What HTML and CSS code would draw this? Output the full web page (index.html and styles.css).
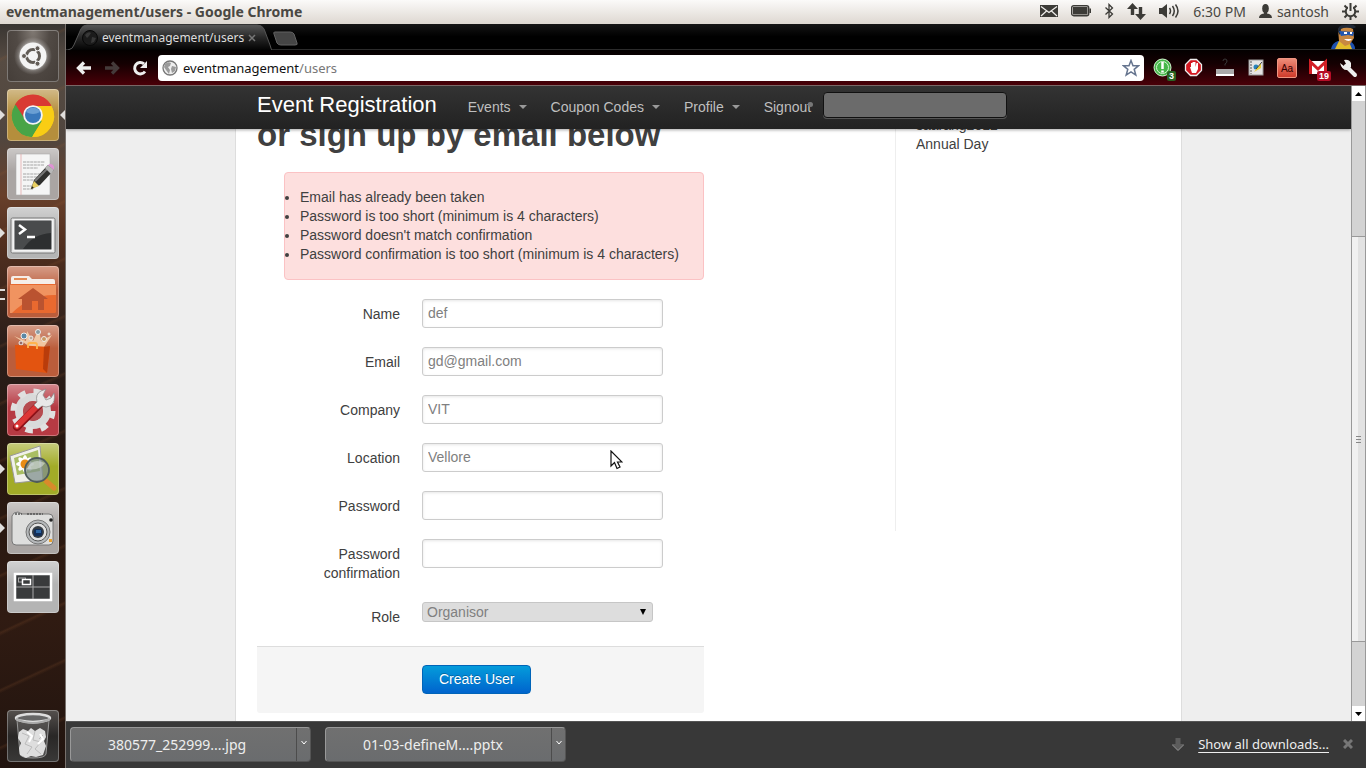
FILE: index.html
```
<!DOCTYPE html>
<html lang="en">
<head>
<meta charset="utf-8">
<title>eventmanagement/users</title>
<link rel="stylesheet" href="styles.css">
</head>
<body class="desktop">
<header class="panel">
  <div class="panel-title">eventmanagement/users - Google Chrome</div>
  <div class="indicators">
    <svg width="18" height="14" viewBox="0 0 18 14"><rect y="1" width="18" height="12" fill="#3c3b37"/><path d="M1 2.500l8 6 8-6M1 12l5.500-5M17 12l-5.500-5" fill="none" stroke="#f1efec" stroke-width="1.200"/></svg>
    <svg width="20" height="12" viewBox="0 0 20 12"><rect x=".7" y=".7" width="17" height="10" rx="2" fill="none" stroke="#3c3b37" stroke-width="1.400"/><rect x="2" y="2" width="14.500" height="7.500" fill="#3c3b37"/><rect x="18.400" y="3.500" width="1.600" height="4.500" fill="#3c3b37"/></svg>
    <svg width="10" height="16" viewBox="0 0 10 16"><path d="M1.500 4.500l7 6.500L5 14.500v-13L8.500 5l-7 6.500" fill="none" stroke="#3c3b37" stroke-width="1.300"/></svg>
    <svg width="19" height="17" viewBox="0 0 19 17"><path d="M5.500 0L11 6H7.200v6H3.800V6H0zM13.500 17L8 11h3.800V4h3.400v7H19z" fill="#3c3b37"/></svg>
    <svg width="21" height="16" viewBox="0 0 21 16"><path d="M0 5h3l5-4v14l-5-4H0z" fill="#3c3b37"/><path d="M10.500 5q2 3 0 6M13.500 3q3.500 5 0 10M16.500 1.500q5 6.500 0 13" fill="none" stroke="#3c3b37" stroke-width="1.500"/></svg>
    <span>6:30 PM</span>
    <span class="user"><svg width="13" height="14" viewBox="0 0 13 14"><ellipse cx="6.500" cy="4.500" rx="3.300" ry="4.500" fill="#3c3b37"/><path d="M5 7h3v2.500q5 .5 5 4.500H0q0-4 5-4.500z" fill="#3c3b37"/></svg>santosh</span>
    <svg width="17" height="17" viewBox="0 0 17 17"><circle cx="8.500" cy="8.500" r="4.700" fill="none" stroke="#3c3b37" stroke-width="2"/><path d="M8.500 13v4M0 8.500h4M13 8.500h4M2.500 2.500l3 3M14.500 2.500l-3 3M2.500 14.500l3-3M14.500 14.500l-3-3" stroke="#3c3b37" stroke-width="2"/><path d="M8.500 0v8" stroke="#f1efec" stroke-width="5"/><path d="M8.500 0v8" stroke="#3c3b37" stroke-width="2"/></svg>
  </div>
</header>
<div class="workspace">
  <nav class="launcher" aria-label="Launcher">
    <button class="tile tile-dash" aria-label="Dash home"><svg width="52" height="52" viewBox="0 0 52 52"><defs><radialGradient id="glow"><stop offset=".65" stop-color="#fff"/><stop offset=".8" stop-color="#fff" stop-opacity=".4"/><stop offset="1" stop-color="#fff" stop-opacity="0"/></radialGradient></defs><circle cx="26" cy="26" r="19" fill="url(#glow)" opacity=".5"/><circle cx="26" cy="26" r="13.500" fill="#f4f4f4"/><circle cx="26" cy="26" r="6.500" fill="none" stroke="#625c56" stroke-width="3"/><path d="M26 26H15M26 26l6 10M26 26l6-10" stroke="#f4f4f4" stroke-width="1.500"/><circle cx="26" cy="26" r="4.500" fill="#f4f4f4"/><g fill="#625c56" stroke="#f4f4f4"><circle cx="17" cy="26" r="2.500"/><circle cx="30.500" cy="18.300" r="2.500"/><circle cx="30.500" cy="33.700" r="2.500"/></g></svg></button>
    <button class="tile tile-chrome running active" aria-label="Google Chrome"><svg width="52" height="52" viewBox="0 0 52 52"><circle cx="26" cy="27" r="21" fill="#f7c70f"/><path d="M26 27L7.500 17A21 21 0 0 1 44.500 17H26z" fill="#d93a33"/><path d="M8.500 15.500A21 21 0 0 0 25 48L35 32 26 27 17 31z" fill="#48a447"/><path d="M25 48A21 21 0 0 0 44.500 17H26L35 32z" fill="#f9cd14"/><path d="M8 15.500A21 21 0 0 1 44 16H26L17 32z" fill="#d93a33"/><path d="M8.500 15.500A21 21 0 0 0 25 48L30 35 19 32z" fill="#48a447"/><circle cx="26" cy="26" r="9.800" fill="#f4f4f4"/><circle cx="26" cy="26" r="8" fill="#3978bb"/><path d="M19 23a8 8 0 0 1 14 0q-7 4-14 0z" fill="#6a9fd3"/></svg></button>
    <button class="tile tile-grey" aria-label="Text Editor"><svg width="52" height="52" viewBox="0 0 52 52"><rect x="9" y="6" width="34" height="41" fill="#f5f5f5" stroke="#aaa" stroke-width=".6"/><path d="M14 6v41" stroke="#e2a0a0" stroke-width=".7"/><path d="M16 14h22M16 17h21M16 20h15M16 26h20M16 29h21M16 32h12M16 38h10M16 41h10" stroke="#a5a5a5" stroke-width="1.200" stroke-dasharray="3 .6"/><path d="M24 41l3-9L41 17l6 5-14 15z" fill="#30302e"/><path d="M28 33l14-14" stroke="#777" stroke-width="2"/><path d="M24 41l3-8 5 5z" fill="#e9cf62"/><path d="M24 41l1-3 2 2z" fill="#222"/><path d="M38 20l3-3 6 5-3 4z" fill="#b8b8b8"/><path d="M41 17q3-2 5 0t1 5z" fill="#df92d4"/></svg></button>
    <button class="tile tile-silver running" aria-label="Terminal"><svg width="52" height="52" viewBox="0 0 52 52"><rect x="4" y="11" width="44" height="35" rx="1.500" fill="#e7e7e7" stroke="#777"/><rect x="7" y="13" width="38" height="30" fill="#2d2f30" stroke="#fff"/><path d="M8 14h36v12q-18 1-28 16H8z" fill="#494b4c"/><path d="M12 18l6 4.500-6 4.500" fill="none" stroke="#fff" stroke-width="2.500"/><path d="M20 30h8" stroke="#fff" stroke-width="2.500"/></svg></button>
    <button class="tile tile-orange double" aria-label="Home Folder"><svg width="52" height="52" viewBox="0 0 52 52"><path d="M4 12q0-2 2-2h16l3 3h21q2 0 2 2v8H4z" fill="#f5eee9"/><path d="M7 13h13" stroke="#e48b55" stroke-width="2"/><rect x="3" y="18" width="46" height="29" rx="1.500" fill="#e9692f"/><path d="M3 19h46v10Q24 28 5 47H3z" fill="#f09360"/><path d="M26 22L11 33h4v11h10v-9h6v9h6V33h4z" fill="#ba5330"/></svg></button>
    <button class="tile tile-orange" aria-label="Software Center"><svg width="52" height="52" viewBox="0 0 52 52"><path d="M26 24L7 11l12 5 1-10 6 10 6-12 2 12 11-6-8 12z" fill="#fbdcb6" opacity=".8"/><g stroke="#eee" stroke-width="1"><circle cx="17" cy="11" r="3" fill="#5c88a5"/><circle cx="31" cy="7" r="2.500" fill="#899ca3"/><circle cx="37" cy="14" r="2.500" fill="#c89861"/><circle cx="14" cy="18" r="2" fill="#9a6c66"/><circle cx="24" cy="13" r="2" fill="#baa99b"/><circle cx="42" cy="9" r="1" fill="#d8b26c"/></g><path d="M8 20l35 2-3 26-31-4z" fill="#e35410"/><path d="M37 22l6-1-3 27-4-4z" fill="#b93c0b"/><path d="M21 23v-3q0-2 2-2h5q2 0 2 2v4" fill="none" stroke="#ffb34f" stroke-width="1.800"/></svg></button>
    <button class="tile tile-red" aria-label="System Settings"><svg width="52" height="52" viewBox="0 0 52 52"><circle cx="26" cy="27" r="14" fill="none" stroke="#d9dada" stroke-width="8"/><circle cx="26" cy="27" r="19.500" fill="none" stroke="#e0e0e0" stroke-width="6" stroke-dasharray="7.300 8"/><circle cx="26" cy="27" r="10" fill="#b64c50"/><path d="M10 43L35 18" stroke="#8d1117" stroke-width="8" stroke-linecap="round"/><path d="M10 42L34 18" stroke="#dc3737" stroke-width="6" stroke-linecap="round"/><path d="M30 18q-2-8 4-11l5-2-3 6 3 5 5-2 3-5q2 9-4 13-4 2-8 0l-4 3-4-4z" fill="#e8e8e8" stroke="#888" stroke-width=".7"/><circle cx="10" cy="42" r="1.500" fill="#fff"/></svg></button>
    <button class="tile tile-lime running" aria-label="Image Viewer"><svg width="52" height="52" viewBox="0 0 52 52"><path d="M3 13l30-10 3 34-28 3z" fill="#f0f0e9" stroke="#999"/><path d="M7 15l24-8 2 21-23 4z" fill="#a9be63"/><g fill="#fff"><ellipse cx="18" cy="21" rx="3" ry="9"/><ellipse cx="18" cy="21" rx="9" ry="3"/><ellipse cx="18" cy="21" rx="3" ry="9" transform="rotate(45 18 21)"/><ellipse cx="18" cy="21" rx="3" ry="9" transform="rotate(-45 18 21)"/></g><circle cx="18" cy="21" r="4.500" fill="#e98c16"/><path d="M39 38l8 7" stroke="#d98a2b" stroke-width="5" stroke-linecap="round"/><circle cx="30" cy="27" r="12" fill="#80908d" fill-opacity=".75" stroke="#4e5b5b" stroke-width="1.800"/><path d="M20 26q5-12 18-6-5 8-18 6z" fill="#d9dfd9" opacity=".6"/></svg></button>
    <button class="tile tile-grey running" aria-label="Camera"><svg width="52" height="52" viewBox="0 0 52 52"><path d="M5 14q1-4 6-4l4 2h27q4 0 4 4v23q0 4-4 4H9q-4 0-4-4z" fill="#dededd" stroke="#777"/><path d="M8 12h7M20 12h16" stroke="#555" stroke-width="1.500" stroke-dasharray="2 1"/><circle cx="31" cy="30" r="12" fill="#b5b8ba" stroke="#777"/><circle cx="31" cy="30" r="9" fill="#e2e2e2" stroke="#555"/><circle cx="31" cy="30" r="6" fill="#343c44"/><rect x="27" y="27" width="8" height="7" rx="2" fill="#132e59"/><rect x="29" y="28" width="5" height="3" fill="#2d66a3"/><circle cx="44" cy="18" r="1.800" fill="#222"/><rect x="42" y="37" width="3" height="3" fill="#e9a02c"/></svg></button>
    <button class="tile tile-silver" aria-label="Workspace Switcher"><svg width="52" height="52" viewBox="0 0 52 52"><rect x="8" y="13" width="36" height="26" fill="#393b3c" stroke="#fff" stroke-width="2.500"/><path d="M26 14v24M9 26h34" stroke="#aaa"/><rect x="11.500" y="17" width="7" height="4" fill="none" stroke="#aaa"/><rect x="15.500" y="18.500" width="8" height="5" fill="#393b3c" stroke="#fff" stroke-width="1.500"/></svg></button>
    <button class="tile tile-trash" aria-label="Trash"><svg width="52" height="52" viewBox="0 0 52 52"><path d="M10 10l3 34q1 4 13 4t13-4l3-34z" fill="#929292" fill-opacity=".25" stroke="#999"/><path d="M12 22l4-3 5 2 3-3 4 3 5-3 5 3 1 6-2 4 2 5-3 9-7 2-5-1-5 2-6-3-1-7 2-5-3-5z" fill="#dedede"/><path d="M15 23l7 3-4 8 7 3-5 7M28 21l-2 9 8 2-6 7 6 5M36 25l-4 4" fill="none" stroke="#bbb"/><path d="M20 22l5 4-3 6M33 24l3 5-5 5" fill="none" stroke="#fff" stroke-width="2"/><ellipse cx="26" cy="8" rx="17" ry="4" fill="#666" stroke="#dedede" stroke-width="2.500"/><path d="M9 9q17 8 34 0" fill="none" stroke="#aaa" stroke-width="2"/></svg></button>
  </nav>
  <section class="browser">
    <div class="tabstrip">
      <div class="tab">
        <svg class="tab-shape" viewBox="0 0 206 26" preserveAspectRatio="none"><defs><linearGradient id="tabfill" x2="0" y2="1"><stop offset="0" stop-color="#575757"/><stop offset=".5" stop-color="#272727"/><stop offset="1" stop-color="#030303"/></linearGradient></defs><path d="M0 26q5-1 6-5L13 5q2-4 6-4h172q5 0 7 4l6 16q1 4 2 5z" fill="url(#tabfill)"/><path d="M0 26q5-1 6-5L13 5q2-4 6-4h172q5 0 7 4l6 16q1 4 2 5" fill="none" stroke="#555"/></svg>
        <svg width="16" height="16" viewBox="0 0 16 16"><circle cx="8" cy="8" r="7.500" fill="#1b1b1b" stroke="#080808"/><path d="M3 5q3-4 6-2L7 6 5 8zM10 7l4 1-2 4-3 1z" fill="#383838"/></svg>
        <span class="tab-title">eventmanagement/users</span>
        <button class="tab-close" aria-label="Close tab"><svg width="8" height="8" viewBox="0 0 8 8"><path d="M1 1l6 6M7 1L1 7" stroke="#777" stroke-width="1.500"/></svg></button>
      </div>
      <button class="new-tab" aria-label="New tab"><svg width="25" height="15" viewBox="0 0 25 15"><path d="M2 1h15q3 0 4 2l3 9q1 2-2 2H8q-3 0-4-2L1 3q-1-2 1-2z" fill="#454545" stroke="#626262"/></svg></button>
      <svg class="avatar" width="25" height="25" viewBox="0 0 25 25"><path d="M0 25q1-6 7-8h12q5 3 5 8z" fill="#1d50ad"/><path d="M4 25l4-8 10 1 3 7z" fill="#e3bd2c"/><path d="M7 5q8-5 15 0l1 9-4 6-5 2-6-5z" fill="#c88842"/><path d="M7 8Q6 0 15 1q7-2 10 2-2 2-5 1-7-1-10 1l-1 6z" fill="#202835"/><path d="M8 7l15 1-1 4-5-1-7 1z" fill="#2156af"/><path d="M13 8h3v2h-3zM19 8h2v2h-2zM13 15h8q-3 4-8 0z" fill="#fff"/></svg>
    </div>
    <div class="toolbar">
      <button class="tool" aria-label="Back"><svg width="16" height="16" viewBox="0 0 16 16"><path d="M15 8H3M8 2.500L2.500 8 8 13.500" fill="none" stroke="#eee" stroke-width="3.300"/></svg></button>
      <button class="tool" aria-label="Forward"><svg width="16" height="16" viewBox="0 0 16 16"><path d="M1 8h12M8 2.500L13.500 8 8 13.500" fill="none" stroke="#443a3a" stroke-width="3.300"/></svg></button>
      <button class="tool" aria-label="Reload"><svg width="16" height="16" viewBox="0 0 16 16"><path d="M13 11.500A5.700 5.700 0 1 1 12 3.800" fill="none" stroke="#eee" stroke-width="3"/><path d="M15 1v7H8z" fill="#eee"/></svg></button>
      <div class="omnibox">
        <svg width="16" height="16" viewBox="0 0 16 16"><circle cx="8" cy="8" r="7" fill="#eee" stroke="#777" stroke-width="1.300"/><path d="M3 4q3-3 6-1L8 6 6 7l2 3-1 4-3-4-2-3zM10 6l4 1-1 4-3 2-1-4z" fill="#9b9b9b"/></svg>
        <a class="url" href="#">eventmanagement<span class="url-path">/users</span></a>
        <svg width="18" height="18" viewBox="0 0 18 18"><path d="M9 1.500l2 5.300h5.500l-4.300 3.500 1.600 5.700L9 12.800 4.200 16l1.600-5.700L1.500 6.800H7z" fill="#fff" stroke="#66758f" stroke-width="1.500"/></svg>
      </div>
      <div class="extensions">
        <button class="ext" aria-label="Alerts"><svg width="20" height="20" viewBox="0 0 20 20"><circle cx="9.500" cy="9.500" r="8.500" fill="#46b74a" stroke="#d5f5d2"/><circle cx="9.500" cy="9.500" r="6" fill="none" stroke="#d6f3d4"/><path d="M9.500 4v7M9.500 12.500v2" stroke="#fff" stroke-width="2.500"/></svg><span class="badge badge-green">3</span></button>
        <button class="ext" aria-label="Ad blocker"><svg width="20" height="20" viewBox="0 0 20 20"><path d="M6.500 1.500h6l5 5v6l-5 5h-6l-5-5v-6z" fill="#d51822" stroke="#eee" stroke-width="1.300"/><path d="M6 9h1V5h1.500v4V4H10v5V4h1.500v5l1-4H14v6l-2 4H8z" fill="#fff"/></svg></button>
        <button class="ext" aria-label="Status"><svg width="20" height="20" viewBox="0 0 20 20"><rect x="1" y="11" width="18" height="5" fill="#aaa"/><path d="M1 17h18" stroke="#fff" stroke-width="2"/><path d="M8 3q0-2 2-2t2 2-2 3v1.500" fill="none" stroke="#393939"/></svg></button>
        <button class="ext" aria-label="Notes"><svg width="20" height="20" viewBox="0 0 20 20"><rect x="3" y="2" width="14" height="15" fill="#e4e4e4" stroke="#999"/><path d="M5 3v13" stroke="#555" stroke-dasharray="2 1"/><circle cx="10" cy="9" r="2.500" fill="#2784ba"/><path d="M8 14L15 5v5z" fill="#ead13c"/><path d="M10 11l6-7" stroke="#444"/></svg></button>
        <button class="ext" aria-label="Dictionary"><span class="dictionary">Aa</span></button>
        <button class="ext" aria-label="Mail"><svg width="20" height="20" viewBox="0 0 20 20"><rect x="1" y="3" width="18" height="13" fill="#fff"/><path d="M2.500 16V4l7.500 7 7.500-7v12" fill="none" stroke="#d31f25" stroke-width="3"/></svg><span class="badge badge-red">19</span></button>
        <button class="ext" aria-label="Menu"><svg width="20" height="20" viewBox="0 0 20 20"><path d="M7 8l9 9" stroke="#eee" stroke-width="4" stroke-linecap="round"/><path d="M1 5l4 3 2-2-2-4q5-1 7 3v4l-3 3q-6 1-8-7z" fill="#eee"/></svg></button>
      </div>
    </div>
    <div class="viewport">
      <div class="page">
        <header class="navbar">
          <div class="navbar-inner">
            <a class="brand" href="#">Event Registration</a>
            <nav class="menu">
              <a class="menu-link caret" href="#">Events</a>
              <a class="menu-link caret" href="#">Coupon Codes</a>
              <a class="menu-link caret" href="#">Profile</a>
              <a class="menu-link signout" href="#">Signout</a>
            </nav>
            <input class="search" type="text" aria-label="Search">
          </div>
        </header>
        <main class="content">
          <div class="signup">
            <h1 class="heading">or sign up by email below</h1>
            <form class="form">
              <ul class="errors">
                <li>Email has already been taken</li>
                <li>Password is too short (minimum is 4 characters)</li>
                <li>Password doesn't match confirmation</li>
                <li>Password confirmation is too short (minimum is 4 characters)</li>
              </ul>
              <div class="field"><label class="label" for="name">Name</label><input class="input" id="name" type="text" value="def"></div>
              <div class="field"><label class="label" for="email">Email</label><input class="input" id="email" type="text" value="gd@gmail.com"></div>
              <div class="field"><label class="label" for="company">Company</label><input class="input" id="company" type="text" value="VIT"></div>
              <div class="field"><label class="label" for="location">Location</label><input class="input" id="location" type="text" value="Vellore">
                <svg class="pointer" width="13" height="20" viewBox="0 0 13 20"><path d="M1 1v15l3.500-3.500L7 18.500l3-1.500-2.500-5H12z" fill="#fff" stroke="#111" stroke-width="1.200"/></svg></div>
              <div class="field"><label class="label" for="password">Password</label><input class="input" id="password" type="password"></div>
              <div class="field"><label class="label" for="confirmation">Password confirmation</label><input class="input" id="confirmation" type="password"></div>
              <div class="field"><label class="label" for="role">Role</label><select class="select" id="role"><option>Organisor</option></select></div>
              <div class="actions"><button class="submit" type="button">Create User</button></div>
            </form>
          </div>
          <aside class="events"><div>saarang2012</div><div>Annual Day</div></aside>
        </main>
      </div>
      <div class="scrollbar">
        <div class="scroll-button"><svg width="7" height="4" viewBox="0 0 7 4"><path d="M0 4l3.500-4L7 4z"/></svg></div>
        <div class="trough trough-top"></div>
        <div class="thumb"><svg width="5" height="7" viewBox="0 0 5 7"><path d="M0 .5h5M0 3.500h5M0 6.500h5" stroke="#888"/></svg></div>
        <div class="trough trough-bottom"></div>
        <div class="scroll-button"><svg width="7" height="4" viewBox="0 0 7 4"><path d="M0 0h7L3.500 4z"/></svg></div>
      </div>
    </div>
    <footer class="downloads">
      <div class="download"><button class="download-name">380577_252999....jpg</button><button class="download-menu" aria-label="Options"><svg width="6" height="5" viewBox="0 0 6 5"><path d="M.5 1L3 4l2.500-3" fill="none" stroke="#fff"/></svg></button></div>
      <div class="download"><button class="download-name">01-03-defineM....pptx</button><button class="download-menu" aria-label="Options"><svg width="6" height="5" viewBox="0 0 6 5"><path d="M.5 1L3 4l2.500-3" fill="none" stroke="#fff"/></svg></button></div>
      <svg class="down-arrow" width="12" height="13" viewBox="0 0 12 13"><path d="M3.500 0h5v6H12l-6 6.500L0 6h3.500z" fill="#5c5c5c"/><path d="M0 6.500l6 6 6-6" fill="none" stroke="#999"/></svg>
      <a class="show-all" href="#">Show all downloads...</a>
      <button class="close-shelf" aria-label="Close downloads"><svg width="10" height="10" viewBox="0 0 10 10"><path d="M1 1l8 8M9 1L1 9" stroke="#777" stroke-width="3"/></svg></button>
    </footer>
  </section>
</div>
</body>
</html>
```
FILE: styles.css
```
* { box-sizing: border-box; }
button { margin: 0; padding: 0; border: 0; background: none; font: inherit; color: inherit; }
svg { display: block; flex: none; }

.desktop {
  display: flex;
  flex-direction: column;
  height: 100vh;
  margin: 0;
  overflow: hidden;
  font-family: "Noto Sans", "Open Sans", sans-serif;
  font-size: 14px;
}

/* Top panel */
.panel {
  display: flex;
  flex: none;
  align-items: center;
  justify-content: space-between;
  height: 24px;
  padding: 0 7px 2px 6px;
  background: linear-gradient(#fbfaf9, #ded8d1);
  color: #4a4843;
  white-space: nowrap;
}
.panel-title { font-weight: bold; }
.indicators { display: flex; align-items: center; gap: 13px; }
.user { display: flex; align-items: center; gap: 5px; }

.workspace { display: flex; flex: 1; min-height: 0; }

/* Launcher */
.launcher {
  display: flex;
  flex: none;
  flex-direction: column;
  gap: 7px;
  width: 66px;
  padding: 6px 7px;
  border-right: 1px solid #77706c;
  background:
    repeating-linear-gradient(155deg, transparent 0 30px, rgba(150, 90, 50, .18) 32px, transparent 35px 52px),
    linear-gradient(#393532, #574c43 5%, #50463f 15%, #68402b 23%, #54301f 29%, #2a1e1a 43%, #27170f 60%, #301b12 80%, #21140f);
}
.tile {
  position: relative;
  flex: none;
  width: 52px;
  height: 52px;
  border-radius: 4px;
  background: linear-gradient(rgba(255, 255, 255, .4), rgba(255, 255, 255, 0) 45%), var(--tile);
  box-shadow: inset 0 0 0 1px rgba(255, 255, 255, .3);
}
.tile-dash { --tile: #4d4640; background: radial-gradient(ellipse at top, #817a74, #514a45 45%, #443d38); }
.tile-chrome { --tile: #b58e3c; }
.tile-grey { --tile: #aaa5a3; }
.tile-silver { --tile: #b4b4b4; }
.tile-orange { --tile: #bb5d3b; }
.tile-red { --tile: #b63a43; }
.tile-lime { --tile: #a2ab27; }
.tile-trash { margin-top: auto; background: linear-gradient(#55504d, #292726 50%, #3a3938); }
.running::before, .double::before {
  content: "";
  position: absolute;
  top: 21px;
  left: -7px;
  border: 5px solid transparent;
  border-left-color: #e0dedc;
  border-right: 0;
}
.double::before { top: 23px; width: 5px; height: 7px; border: solid #e0dedc; border-width: 2px 0; }
.active::after {
  content: "";
  position: absolute;
  top: 21px;
  right: -6px;
  border: 5px solid transparent;
  border-right-color: #e0dedc;
  border-left: 0;
}

/* Browser */
.browser { display: flex; flex: 1; flex-direction: column; min-width: 0; }
.tabstrip {
  display: flex;
  flex: none;
  align-items: center;
  height: 26px;
  padding: 0 10px 0 2px;
  border-bottom: 1px solid #2b2b2b;
  background: linear-gradient(#151515, #000 50%);
}
.tab {
  position: relative;
  display: flex;
  align-items: center;
  gap: 4px;
  width: 204px;
  height: 26px;
  padding: 2px 16px 0 14px;
  color: #ddd;
  font-size: 12px;
}
.tab > * { position: relative; }
.tab .tab-shape { position: absolute; inset: 0; width: 100%; height: 100%; }
.tab-close { margin-left: auto; }
.new-tab { margin: 3px 0 0 1px; }
.avatar { margin-left: auto; }

.toolbar {
  display: flex;
  flex: none;
  align-items: center;
  gap: 12px;
  height: 36px;
  padding: 0 7px 0 10px;
  border-bottom: 1px solid #796766;
  background: linear-gradient(#030000, #150002 40%, #4a0008);
}
.omnibox {
  display: flex;
  flex: 1;
  align-items: center;
  gap: 5px;
  height: 26px;
  margin: 0 -3px 0 -2px;
  padding: 0 4px;
  border-radius: 4px;
  background: #fff;
}
.url { flex: 1; color: #111; font-size: 13px; text-decoration: none; }
.url-path { color: #777; }
.extensions { display: flex; gap: 11px; }
.ext { position: relative; width: 20px; height: 20px; }
.badge {
  position: absolute;
  right: -3px;
  bottom: -3px;
  padding: 0 2px;
  border-radius: 2px;
  color: #fff;
  font: bold 9px/10px "Liberation Sans", Arial, sans-serif;
}
.badge-green { background: #286322; }
.badge-red { background: #b60d27; }
.dictionary {
  display: block;
  padding-top: 2px;
  border: 1px solid #f09582;
  border-radius: 2px;
  background: linear-gradient(#ee8c78, #cf3a2b);
  color: #300;
  font: 10px/16px "Liberation Sans", Arial, sans-serif;
}

.viewport { display: flex; flex: 1; min-height: 0; background: #eee; }
.page {
  display: flex;
  flex: 1;
  flex-direction: column;
  min-width: 0;
  overflow: hidden;
  color: #404040;
  font: 14px/19px "Liberation Sans", Arial, sans-serif;
}
.navbar {
  position: relative;
  z-index: 1;
  flex: none;
  background: linear-gradient(#333, #222);
  box-shadow: 0 1px 3px rgba(0, 0, 0, .35);
}
.navbar-inner {
  display: flex;
  align-items: center;
  max-width: 947px;
  height: 43px;
  margin: 0 auto;
  padding: 0 22px 6px;
}
.brand { color: #fff; font-size: 22px; text-decoration: none; white-space: nowrap; }
.menu { display: flex; gap: 24px; margin-left: 31px; }
.menu-link { display: flex; align-items: center; gap: 8px; padding-top: 5px; color: #bfbfbf; text-decoration: none; white-space: nowrap; }
.caret::after { content: ""; border: 4px solid transparent; border-top-color: #999; border-bottom: 0; }
.signout { position: relative; }
.signout::after {
  content: "";
  position: absolute;
  top: 9px;
  right: -2px;
  width: 5px;
  height: 5px;
  border-radius: 50%;
  background: #777;
}
.search {
  width: 184px;
  height: 26px;
  margin-left: 12px;
  padding: 0 8px;
  border: 1px solid #111;
  border-radius: 4px;
  background: #6b6b6b;
  box-shadow: 0 1px 0 #555;
  color: #fff;
}

.content {
  display: grid;
  flex: 1;
  grid-template-columns: minmax(0, 1fr) 266px;
  width: 100%;
  max-width: 947px;
  margin: -14px auto 0;
  padding: 0 20px 0 21px;
  border: solid #ddd;
  border-width: 0 1px;
  background: #fff;
}
.signup { max-width: 447px; }
.heading { margin: 0; padding-top: 2px; font-size: 33px; line-height: 36px; white-space: nowrap; }
.errors {
  margin: 19px 0 19px 27px;
  padding: 15px;
  border: 1px solid #fbc2c4;
  border-radius: 4px;
  background: #fddfde;
  white-space: nowrap;
}
.field {
  position: relative;
  display: grid;
  grid-template-columns: 143px 1fr;
  gap: 22px;
  align-items: start;
  margin-bottom: 19px;
}
.label { padding: 6px 0 0 60px; text-align: right; }
.input, .select {
  width: 241px;
  height: 29px;
  padding: 0 5px 2px;
  border: 1px solid #ccc;
  border-radius: 3px;
  background: #fff;
  color: #808080;
  font: inherit;
}
.input { box-shadow: inset 0 1px 3px rgba(0, 0, 0, .1); }
.select {
  width: 231px;
  height: 20px;
  padding: 0 4px;
  border-color: #c6c6c6;
  appearance: none;
  background: #ddd url("data:image/svg+xml,%3Csvg xmlns='http://www.w3.org/2000/svg' width='6' height='6'%3E%3Cpath d='M0 0h6L3 6z'/%3E%3C/svg%3E") no-repeat right 6px center;
  line-height: 18px;
}
.pointer { position: absolute; top: 7px; left: 353px; }
.actions {
  padding: 18px 0 19px 165px;
  border-top: 1px solid #ddd;
  border-radius: 0 0 3px 3px;
  background: #f5f5f5;
}
.submit {
  display: block;
  height: 29px;
  padding: 0 16px;
  border: 1px solid #0064b8;
  border-radius: 4px;
  background: linear-gradient(#049cdb, #0064cd);
  color: #fff;
  text-shadow: 0 -1px 0 rgba(0, 0, 0, .25);
}
.events {
  align-self: start;
  min-height: 416px;
  padding: 1px 0 0 20px;
  border-left: 1px solid #eee;
}

.scrollbar { display: flex; flex: none; flex-direction: column; width: 15px; border: solid #999; border-width: 0 1px; }
.scroll-button { display: flex; flex: none; align-items: center; justify-content: center; height: 15px; background: #fff; }
.trough { background: #d3d3d3; }
.trough-top { flex: 136; }
.trough-bottom { flex: 64; }
.thumb {
  display: flex;
  flex: 406;
  align-items: center;
  justify-content: center;
  border: solid #999;
  border-width: 1px 0;
  background: linear-gradient(90deg, #f1f1f1 50%, #e2e2e2 50%);
}

/* Download shelf */
.downloads {
  display: flex;
  flex: none;
  align-items: center;
  gap: 14px;
  height: 47px;
  padding: 0 13px 2px 4px;
  border-top: 1px solid #555;
  background: #383838;
  color: #eee;
  font-size: 13px;
}
.download {
  display: flex;
  width: 241px;
  height: 35px;
  border: 1px solid #888;
  border-color: #999 #555 #555 #999;
  border-radius: 4px;
  background: linear-gradient(#707070, #6a6c6e);
  font-size: 14px;
}
.download-name { flex: 1; padding-left: 37px; text-align: left; white-space: nowrap; }
.download-menu { width: 14px; padding: 0 0 4px 4px; border-left: 1px solid #4c4c4c; }
.down-arrow { margin-left: auto; }
.show-all { color: #eee; text-underline-offset: 3px; }
```
